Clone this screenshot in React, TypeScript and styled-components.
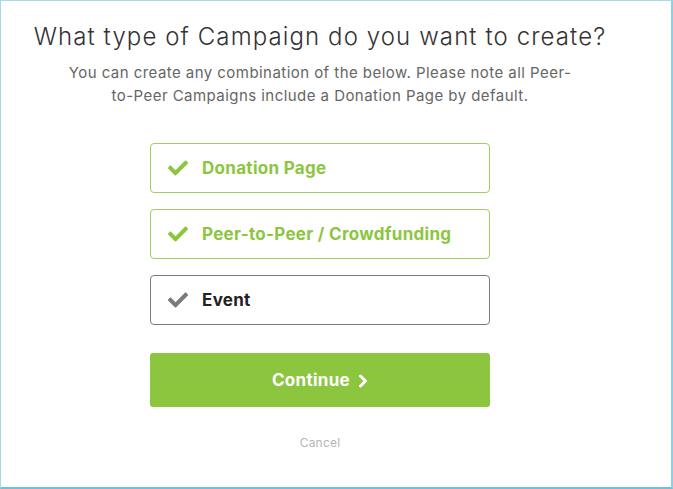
import React, { useState } from "react";
import styled, { createGlobalStyle } from "styled-components";
import { FaCheck } from "react-icons/fa";

const Global = createGlobalStyle`
  html, body { margin: 0; padding: 0; background: #fff; }
  * { box-sizing: border-box; }
`;

const Frame = styled.div`
  width: 673px;
  height: 489px;
  border: 1px solid #a9d8ea;
  border-bottom: 2px solid #6cc0e0;
  border-right: 2px solid #8fcfe6;
  display: flex;
  flex-direction: column;
  align-items: center;
  font-family: Inter, "DejaVu Sans", sans-serif;
  padding: 19px 32px 0 0;
`;

const Title = styled.h1`
  margin: 0;
  font-size: 24px;
  font-weight: 300;
  color: #333;
  letter-spacing: 1.1px;
  line-height: 34px;
  white-space: nowrap;
`;

const Sub = styled.p`
  margin: 7px 0 0;
  width: 540px;
  text-align: center;
  font-size: 15px;
  line-height: 23px;
  letter-spacing: 0.45px;
  color: #666;
  font-weight: 400;
`;

const Options = styled.div`
  margin-top: 36px;
  width: 340px;
  display: flex;
  flex-direction: column;
  gap: 16px;
`;

const Option = styled.button<{ $on: boolean }>`
  height: 50px;
  width: 100%;
  display: flex;
  align-items: center;
  gap: 14px;
  padding: 0 0 0 17px;
  background: #fff;
  border: 1px solid ${(p) => (p.$on ? "#9fcf5f" : "#7a7a7a")};
  border-radius: 4px;
  color: ${(p) => (p.$on ? "#8cc63f" : "#222")};
  font-family: inherit;
  font-size: 17px;
  font-weight: 700;
  letter-spacing: 0.3px;
  cursor: pointer;
  text-align: left;
  svg {
    color: ${(p) => (p.$on ? "#8cc63f" : "#7a7a7a")};
    width: 20px;
    height: 20px;
  }
`;

const Continue = styled.button`
  margin-top: 28px;
  width: 340px;
  height: 54px;
  border: none;
  border-radius: 3px;
  background: #8cc63f;
  color: #fff;
  font-family: inherit;
  font-size: 17px;
  font-weight: 700;
  letter-spacing: 0.3px;
  display: flex;
  align-items: center;
  justify-content: center;
  gap: 8px;
  cursor: pointer;
`;

const Chevron = styled.svg`
  width: 10px;
  height: 14px;
  margin-top: 1px;
`;

const Cancel = styled.a`
  margin-top: 28px;
  font-size: 12px;
  color: #b5b5b5;
  letter-spacing: 0.2px;
  cursor: pointer;
`;

export default function App() {
  const [sel, setSel] = useState({ d: true, p: true, e: false });
  const items: { k: "d" | "p" | "e"; label: string }[] = [
    { k: "d", label: "Donation Page" },
    { k: "p", label: "Peer-to-Peer / Crowdfunding" },
    { k: "e", label: "Event" },
  ];
  return (
    <>
      <Global />
      <Frame>
        <Title>What type of Campaign do you want to create?</Title>
        <Sub>
          You can create any combination of the below. Please note all Peer-
          <br />
          to-Peer Campaigns include a Donation Page by default.
        </Sub>
        <Options>
          {items.map((it) => (
            <Option
              key={it.k}
              $on={sel[it.k]}
              onClick={() => setSel({ ...sel, [it.k]: !sel[it.k] })}
            >
              <FaCheck />
              {it.label}
            </Option>
          ))}
        </Options>
        <Continue>
          Continue
          <Chevron viewBox="0 0 10 14">
            <polyline
              points="2.5,2 7.5,7 2.5,12"
              fill="none"
              stroke="#fff"
              strokeWidth="3"
              strokeLinecap="round"
              strokeLinejoin="round"
            />
          </Chevron>
        </Continue>
        <Cancel>Cancel</Cancel>
      </Frame>
    </>
  );
}
